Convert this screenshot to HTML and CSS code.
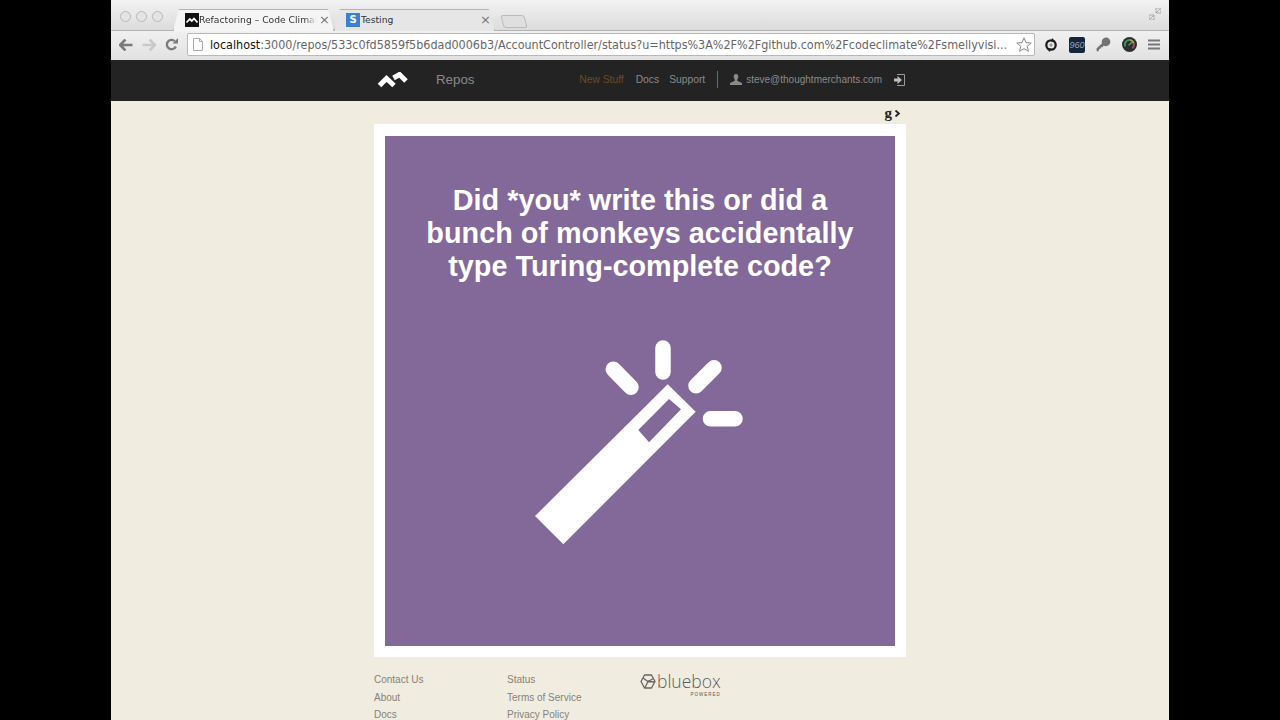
FILE: index.html
```html
<!DOCTYPE html>
<html lang="en">
<head>
    <meta charset="UTF-8">
    <meta name="viewport" content="width=device-width, initial-scale=1.0">
    <title>Refactoring - Code Climate</title>
    <link rel="stylesheet" href="styles.css">
</head>
<body>
    <div class="window">
        <div class="tabstrip">
            <div class="lights"><span></span><span></span><span></span></div>
            <div class="tab tab-active">
                <svg class="favicon" width="14" height="14" viewBox="0 0 14 14"><rect width="14" height="14" fill="#111"/><path d="M1.500 9.500 4.800 6 6.800 8 9 5.500 12.500 9.500" fill="none" stroke="#fff" stroke-width="1.800"/></svg>
                <span class="tab-title">Refactoring – Code Climat</span>
                <span class="tab-close">×</span>
            </div>
            <div class="tab">
                <span class="favicon-s">S</span>
                <span class="tab-title">Testing</span>
                <span class="tab-close">×</span>
            </div>
            <div class="tab-new"></div>
            <svg class="fullscreen" width="12" height="12" viewBox="0 0 12 12"><path d="M0 7H5V12H0ZM7 0H12V5H7Z" fill="none" stroke="#aaa"/><path d="M1 11 5 7M7 5 11 1" stroke="#aaa"/></svg>
        </div>

        <div class="toolbar">
            <svg class="nav-icon" width="14" height="12" viewBox="0 0 14 12"><path d="M6.500 0.500 1 6 6.500 11.500M1.500 6H13.500" fill="none" stroke="#7a7a7a" stroke-width="2.600"/></svg>
            <svg class="nav-icon" width="14" height="12" viewBox="0 0 14 12"><path d="M7.500 0.500 13 6 7.500 11.500M12.500 6H0.500" fill="none" stroke="#c9c9c9" stroke-width="2.600"/></svg>
            <svg class="nav-icon" width="13" height="13" viewBox="0 0 13 13"><path d="M10.800 8.500A4.700 4.700 0 1 1 9.700 3" fill="none" stroke="#7a7a7a" stroke-width="2.300"/><path d="M7.500 5.500H13V0Z" fill="#7a7a7a"/></svg>
            <div class="omnibox">
                <svg width="10" height="13" viewBox="0 0 10 13"><path d="M0.500 0.500H6.500L9.500 3.500V12.500H0.500ZM6.500 0.500V3.500H9.500" fill="#fff" stroke="#aaa"/></svg>
                <span class="url"><b>localhost</b>:3000/repos/533c0fd5859f5b6dad0006b3/AccountController/status?u=https%3A%2F%2Fgithub.com%2Fcodeclimate%2Fsmellyvisi...</span>
                <svg class="star" width="16" height="15" viewBox="0 0 16 15"><path d="M8 0.800 10 5.600 15.200 6 11.200 9.300 12.500 14.300 8 11.600 3.500 14.300 4.800 9.300 0.800 6 6 5.600Z" fill="#fff" stroke="#888"/></svg>
            </div>
            <div class="extensions">
                <svg width="14" height="14" viewBox="0 0 14 14"><circle cx="7" cy="7" r="4.700" fill="none" stroke="#1c1c1c" stroke-width="2.300"/><path d="M8 0 11 3 7.500 4ZM6 14 3 11 6.500 10Z" fill="#1c1c1c"/><circle cx="7" cy="7" r="1.700" fill="#9a9a9a"/></svg>
                <span class="ext-960">960</span>
                <svg width="15" height="15" viewBox="0 0 15 15"><path d="M0.800 14.500 0.500 11.500 6 6.200A4.300 4.300 0 1 1 9 9L7.500 8.800 6.500 10.200 5 10.200 4.500 11.700 3 12 2.800 14Z" fill="#737373"/></svg>
                <svg width="15" height="15" viewBox="0 0 16 16"><circle cx="8" cy="8" r="8" fill="#2f2f2f"/><path d="M3.500 10A5 5 0 0 1 8 3" fill="none" stroke="#3c9c5c" stroke-width="2"/><path d="M8 3A5 5 0 0 1 12.500 7" fill="none" stroke="#b0a04c" stroke-width="2"/><path d="M12.500 7A5 5 0 0 1 11 12" fill="none" stroke="#a84a5c" stroke-width="2"/><path d="M7 9 11 5" stroke="#3ca070" stroke-width="1.500"/></svg>
                <svg width="12" height="11" viewBox="0 0 12 11"><path d="M0 1.500H12M0 5.500H12M0 9.500H12" stroke="#777" stroke-width="2"/></svg>
            </div>
        </div>

        <div class="topnav">
            <div class="topnav-inner">
                <svg class="logo" width="31" height="16" viewBox="0 0 31 16"><path d="M2.500 13.500 9.500 6.500 17 13.500M16.500 6 22.500 2.500 29 9" fill="none" stroke="#fff" stroke-width="5"/></svg>
                <a class="repos">Repos</a>
                <div class="topnav-links">
                    <a class="new-stuff">New Stuff</a>
                    <a class="docs">Docs</a>
                    <a class="support">Support</a>
                    <span class="divider"></span>
                    <svg width="12" height="11" viewBox="0 0 12 11"><path d="M6 0C8 0 8.500 1.500 8.300 3.200 8.200 4.200 7.700 5 7.200 5.700V6.800L12 9V11H0V9L4.800 6.800V5.700C4.300 5 3.800 4.200 3.700 3.200 3.500 1.500 4 0 6 0Z" fill="#8a8a8a"/></svg>
                    <a class="account">steve@thoughtmerchants.com</a>
                    <svg class="signout" width="11" height="12" viewBox="0 0 11 12"><path d="M3 0.500H10.500V11.500H3" fill="none" stroke="#9a9a9a"/><path d="M0 4.500H3.500V2L8 6 3.500 10V7.500H0Z" fill="#bdbdbd"/></svg>
                </div>
            </div>
        </div>

        <div class="page">
            <div class="gplus"><b>g</b><svg width="5" height="7" viewBox="0 0 5 7"><path d="M0.500 0.500 3.800 3.500 0.500 6.500" fill="none" stroke="#222" stroke-width="1.800"/></svg></div>
            <div class="card">
                <div class="poster">
                    <h1>Did *you* write this or did a<br>bunch of monkeys accidentally<br>type Turing-complete code?</h1>
                    <svg class="wand" width="208" height="205" viewBox="0 0 208 205">
                        <path fill-rule="evenodd" d="M0 176 28.300 204.300 160.700 71.700 132.700 44.300ZM103.300 90 114 102.300 146 69.300 134 59Z" fill="#fff"/>
                        <path d="M128 8V32M78.300 29.300 96 47.300M179 27.700 161 45.700M175.500 78.800H200" stroke="#fff" stroke-width="15.500" stroke-linecap="round" fill="none"/>
                    </svg>
                </div>
            </div>
            <div class="footer">
                <ul class="footer-col">
                    <li>Contact Us</li>
                    <li>About</li>
                    <li>Docs</li>
                </ul>
                <ul class="footer-col">
                    <li>Status</li>
                    <li>Terms of Service</li>
                    <li>Privacy Policy</li>
                </ul>
                <div class="bluebox">
                    <div class="bluebox-name">
                        <svg width="16" height="15" viewBox="0 0 16 15"><path d="M4.500 1H11.500L15 7.500 11.500 14H4.500L1 7.500ZM3 4 8 7.500 13.500 4.500M8 7.500 5 13.500M8 7.500 15 8" fill="none" stroke="#666" stroke-width="1.300" stroke-linejoin="round"/></svg>
                        <span>bluebox</span>
                    </div>
                    <div class="bluebox-sub">POWERED</div>
                </div>
            </div>
        </div>
    </div>
</body>
</html>
```

FILE: styles.css
```css
html, body {
    margin: 0;
    height: 100%;
    overflow: hidden;
    background: #000;
}
.window {
    width: 1058px;
    height: 720px;
    margin: 0 auto;
    display: flex;
    flex-direction: column;
    overflow: hidden;
    background: #f1ece0;
    font-family: "Liberation Sans", Arial, sans-serif;
}
a {
    color: inherit;
}

/* browser chrome */
.tabstrip {
    flex: none;
    height: 30px;
    box-sizing: border-box;
    display: flex;
    align-items: flex-end;
    padding-left: 9px;
    background: linear-gradient(#f2f2f2, #dcdcdc);
}
.lights {
    display: flex;
    gap: 5px;
    align-self: flex-start;
    margin-top: 11px;
    margin-right: 14px;
}
.lights span {
    width: 9px;
    height: 9px;
    border: 1px solid #b9b9b9;
    border-radius: 50%;
    background: #e4e4e4;
}
.tab {
    position: relative;
    width: 153px;
    height: 21px;
    box-sizing: border-box;
    display: flex;
    align-items: center;
    gap: 0;
    padding: 0 0 0 8px;
    margin-right: 8px;
    font-family: "DejaVu Sans", sans-serif;
    font-size: 9.200px;
    color: #333;
    z-index: 1;
}
.tab::before {
    content: "";
    position: absolute;
    inset: 0 -4px -1px -4px;
    background: #e6e6e6;
    border: 1px solid #b4b4b4;
    border-bottom: none;
    border-radius: 4px 4px 0 0;
    z-index: -1;
    clip-path: polygon(0 100%, 6px 0, calc(100% - 6px) 0, 100% 100%);
}
.tab-active::before {
    background: #f5f5f5;
}
.favicon {
    flex: none;
}
.favicon-s {
    flex: none;
    width: 14px;
    height: 14px;
    margin-right: 1px;
    background: #3f7fd0;
    color: #fff;
    font-weight: bold;
    font-size: 10px;
    line-height: 14px;
    text-align: center;
}
.tab-title {
    flex: 1;
    white-space: nowrap;
}
.tab-active .tab-title {
    -webkit-mask-image: linear-gradient(to right, #000 88%, transparent 98%);
    mask-image: linear-gradient(to right, #000 88%, transparent 98%);
}
.tab-close {
    flex: none;
    font-size: 13px;
    color: #777;
}
.tab-new {
    width: 22px;
    height: 11px;
    margin-left: 3px;
    margin-bottom: 2px;
    background: #dfdfdf;
    border: 1px solid #bbb;
    border-radius: 3px;
    transform: skewX(15deg);
}
.fullscreen {
    margin-left: auto;
    margin-right: 8px;
    align-self: flex-start;
    margin-top: 8px;
}
.toolbar {
    flex: none;
    height: 30px;
    box-sizing: border-box;
    display: flex;
    align-items: center;
    border-top: 1px solid #b4b4b4;
    padding-left: 8px;
    padding-bottom: 2px;
    gap: 9px;
    background: linear-gradient(#f0f0f0, #e2e2e2);
}
.nav-icon {
    flex: none;
}
.omnibox {
    flex: none;
    width: 848px;
    height: 23px;
    box-sizing: border-box;
    display: flex;
    align-items: center;
    gap: 7px;
    padding: 0 2px 0 5px;
    background: #fff;
    border: 1px solid #b8b8b8;
    border-radius: 2px;
}
.url {
    flex: 1;
    white-space: nowrap;
    overflow: hidden;
    font-family: "DejaVu Sans", sans-serif;
    font-size: 12.440px;
    font-stretch: condensed;
    color: #666;
}
.url b {
    font-weight: normal;
    color: #111;
}
.star {
    flex: none;
}
.extensions {
    flex: none;
    display: flex;
    align-items: center;
    gap: 11px;
}
.ext-960 {
    width: 16px;
    height: 16px;
    background: #14263a;
    border-radius: 2px;
    color: #93a5b8;
    font-size: 9px;
    font-style: italic;
    line-height: 16px;
    text-align: center;
}

/* site nav */
.topnav {
    height: 41px;
    flex: none;
    background: #232323;
}
.topnav-inner {
    width: 532px;
    height: 100%;
    margin: 0 auto;
    display: flex;
    align-items: center;
    padding-left: 3px;
    padding-bottom: 2px;
    box-sizing: border-box;
}
.logo {
    flex: none;
}
.repos {
    margin-left: 28px;
    font-size: 13.300px;
    color: #8a8a8a;
}
.topnav-links {
    margin-left: auto;
    display: flex;
    align-items: center;
    font-size: 10px;
    color: #8a8a8a;
    padding-right: 1px;
}
.topnav-links .new-stuff {
    font-size: 10.300px;
    margin-right: 12px;
    color: #6e4a22;
}
.topnav-links .docs {
    font-size: 10.300px;
    margin-right: 10px;
}
.topnav-links .support {
    font-size: 10.300px;
    margin-right: 12px;
}
.divider {
    width: 1px;
    height: 17px;
    background: #6a6a6a;
    margin-right: 12px;
}
.topnav-links .account {
    margin-left: 4px;
    margin-right: 12px;
}

/* page */
.page {
    flex: none;
    width: 532px;
    margin: 0 auto;
}
.gplus {
    height: 23px;
    box-sizing: border-box;
    padding-top: 2px;
    display: flex;
    justify-content: flex-end;
    align-items: center;
    gap: 3px;
    padding-right: 6px;
    font-family: "Liberation Serif", serif;
    font-size: 15px;
    color: #222;
}
.card {
    background: #fff;
    padding: 12px 11px 11px;
}
.poster {
    height: 510px;
    box-sizing: border-box;
    padding-top: 48px;
    display: flex;
    flex-direction: column;
    align-items: center;
    background: #83689a;
}
.poster h1 {
    margin: 0;
    text-align: center;
    font-size: 28.800px;
    line-height: 33px;
    font-weight: bold;
    color: #fff;
}
.wand {
    display: block;
    margin-top: 57px;
    margin-left: -2px;
}
.footer {
    display: flex;
    padding-top: 14px;
    font-size: 10px;
    color: #86827a;
}
.footer-col {
    list-style: none;
    margin: 0;
    padding: 0;
    width: 133px;
}
.footer-col li {
    height: 17.500px;
    line-height: 17px;
}
.bluebox {
    margin-top: 3px;
    color: #5c5c5c;
}
.bluebox-name {
    display: flex;
    align-items: center;
    gap: 1px;
    font-family: "Open Sans", sans-serif;
    font-weight: 300;
    font-size: 17.500px;
    line-height: 15px;
}
.bluebox-sub {
    margin-top: 3px;
    text-align: right;
    font-size: 4.500px;
    line-height: 5px;
    letter-spacing: 1px;
    color: #555;
}
```
